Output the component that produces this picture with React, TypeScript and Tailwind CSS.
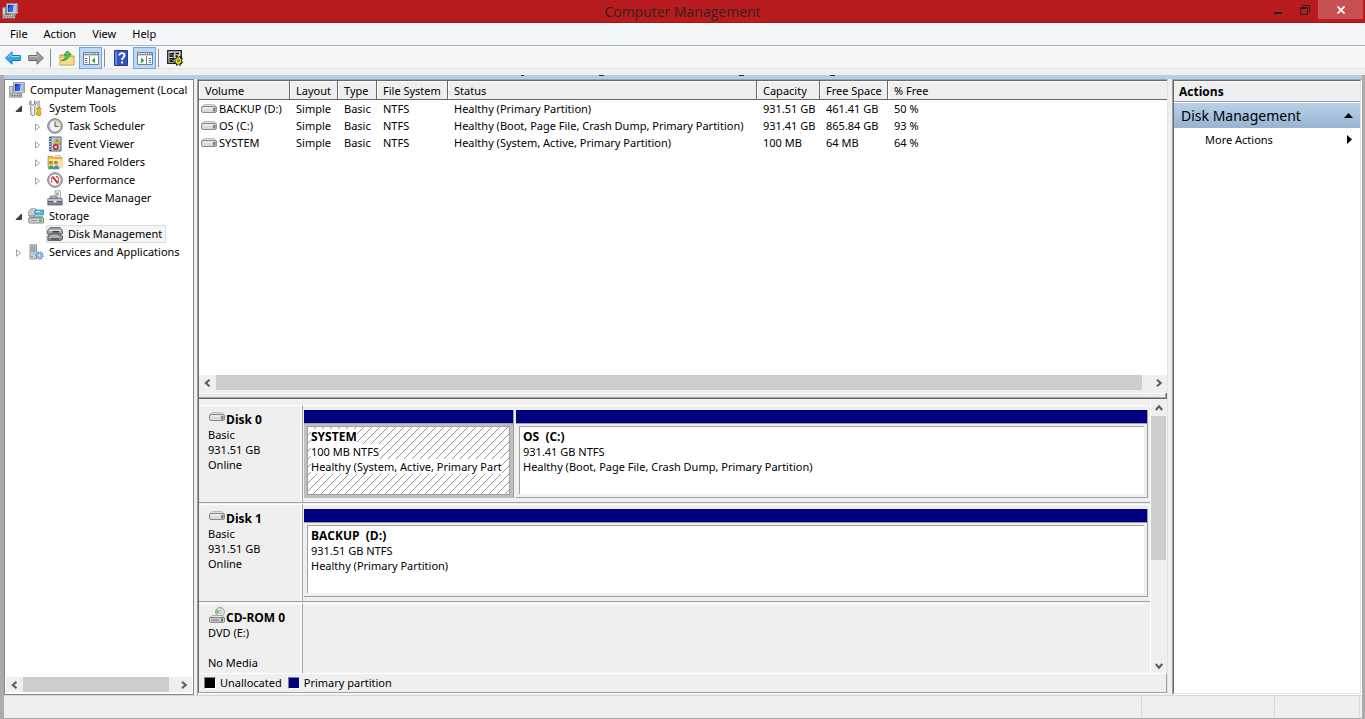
import React from 'react';

type IconProps = { className?: string };

function ComputerIcon({ className = 'h-4 w-4' }: IconProps) {
  return (
    <svg viewBox="0 0 16 16" className={className} aria-hidden="true">
      <path d="M4.500.6h11.100v9.800H4.500z" fill="#dddbd0" stroke="#8f8f88" strokeWidth=".9" />
      <path d="M5.800 1.900h8.600v7H5.800z" fill="#1532b4" />
      <path d="M11.500 1.900h2.900v7h-4z" fill="#a9c6f2" />
      <path d="M6.500 5.500 9.500 1.900h2L10 8.900H7z" fill="#2f62ec" />
      <path d="M8 10.500h5l1 2H8z" fill="#b9b9b0" />
      <path d="M.6 4.500h3v7.500h-3z" fill="#cfd3d6" stroke="#7f8487" strokeWidth=".8" />
      <path d="M.8 11.500h11.700l1.200 4H0z" fill="#7f868c" />
      <path d="M1.500 12.600h10.500M1 14.200h12" stroke="#e2e5e8" strokeWidth=".9" strokeDasharray="1.500 1" />
    </svg>
  );
}

function ToolsIcon() {
  return (
    <svg viewBox="0 0 16 16" className="h-4 w-4" aria-hidden="true">
      <path d="M3 .8v3.400l1.800 1 1.800-1V.8c2 1 2.200 3.800.2 5.400V14c0 2-4 2-4 0V6.200C.8 4.600 1 1.800 3 .8z" fill="#eceeef" stroke="#6f7275" strokeWidth=".9" />
      <path d="M9.800 1h1.800v7H9.800z" fill="#d8dadc" stroke="#85888b" strokeWidth=".6" />
      <path d="M8.700 8h4v2l-.8.8.8 1V15c-.6 1-3.400 1-4 0v-3.200l.8-1-.8-.8z" fill="#f6b51c" stroke="#b97b08" strokeWidth=".7" />
    </svg>
  );
}

function ClockIcon() {
  return (
    <svg viewBox="0 0 16 16" className="h-4 w-4" aria-hidden="true">
      <circle cx="8" cy="8" r="7.300" fill="#b9bcc0" stroke="#77797c" strokeWidth="1" />
      <circle cx="8" cy="8" r="5.900" fill="#eef4fa" stroke="#8a8d92" strokeWidth=".6" />
      <path d="M8 8V2.400A5.600 5.600 0 0 1 13.600 8z" fill="#f7dda0" />
      <path d="M8 3.500V8.500h3.500" fill="none" stroke="#4a5670" strokeWidth="1" />
    </svg>
  );
}

function EventIcon() {
  return (
    <svg viewBox="0 0 16 16" className="h-4 w-4" aria-hidden="true">
      <path d="M2.500 1h11.500v14H2.500z" fill="#c3d6ec" stroke="#4c5f86" strokeWidth="1" />
      <path d="M2 1h2.500v14H2z" fill="#49597e" />
      <path d="M1 3h3M1 5.500h3M1 8h3M1 10.500h3M1 13h3" stroke="#d5dae3" strokeWidth="1" />
      <path d="M6 3.500h7M6 6h7M6 8.500h7M6 13.500h7" stroke="#7a93bd" strokeWidth=".7" />
      <path d="m10 2.500 3 5.300H7z" fill="#ffd21f" stroke="#a7800b" strokeWidth=".6" />
      <path d="M10 4.300v2" stroke="#222" strokeWidth=".8" />
      <circle cx="8.700" cy="11" r="2.800" fill="#d93a34" stroke="#8f1b18" strokeWidth=".5" />
      <path d="m7.700 10 2 2m0-2-2 2" stroke="#fff" strokeWidth=".9" />
    </svg>
  );
}

function SharedIcon() {
  return (
    <svg viewBox="0 0 16 16" className="h-4 w-4" aria-hidden="true">
      <path d="M1 2.500h5l1 1.200h8V13H1z" fill="#e9bd4b" stroke="#b98b24" strokeWidth=".7" />
      <path d="M2 5h13v8H2z" fill="#fbe39a" />
      <path d="M8.500 1.500h4.500v2H8.500z" fill="#fff3c4" stroke="#b98b24" strokeWidth=".5" />
      <path d="M2.500 7.500h3v2.500h-3zM7.500 7.500h3v2.500h-3z" fill="#4a3a22" />
      <circle cx="4.300" cy="9.800" r="1.500" fill="#d9a46b" />
      <circle cx="9.300" cy="9.800" r="1.500" fill="#d9a46b" />
      <path d="M1.200 15.300c0-5 5.900-5 5.900 0z" fill="#3aa26b" />
      <path d="M6.400 15.300c0-5 5.900-5 5.900 0z" fill="#3f8fd0" />
    </svg>
  );
}

function GaugeIcon() {
  return (
    <svg viewBox="0 0 16 16" className="h-4 w-4" aria-hidden="true">
      <circle cx="8" cy="8" r="7.300" fill="#c3c5c8" stroke="#77797c" strokeWidth="1" />
      <circle cx="8" cy="8" r="5.900" fill="#fff" stroke="#8a8d92" strokeWidth=".6" />
      <path d="M4.700 10.500V6.500L6 5M9 4.300l2.300 1.200V10" fill="none" stroke="#d21f24" strokeWidth="1.200" strokeDasharray="2 .7" />
      <path d="m5.500 4.500 5.500 7" stroke="#c01a20" strokeWidth="1.700" />
    </svg>
  );
}

function DeviceIcon() {
  return (
    <svg viewBox="0 0 16 16" className="h-4 w-4" aria-hidden="true">
      <path d="M8 .8h5.500v7H8z" fill="#f4f6f7" stroke="#8d9296" strokeWidth=".8" />
      <path d="M9.500 2.500h2v3h-2z" fill="#5cae4d" />
      <path d="M3 6h7v3H3z" fill="#aab0b5" stroke="#6d7378" strokeWidth=".7" />
      <path d="M.8 8.500h14.400v3H.8z" fill="#bfc4c8" stroke="#5f656a" strokeWidth=".7" />
      <path d="M.8 11.500h14.400V15H.8z" fill="#7f868c" stroke="#4f555a" strokeWidth=".7" />
      <path d="M6.500 10.500h3v2h-3z" fill="#e7e9eb" />
    </svg>
  );
}

function StorageIcon() {
  return (
    <svg viewBox="0 0 16 16" className="h-4 w-4" aria-hidden="true">
      <path d="M.6 7.500V4c1-4 6-4.500 8-2.500L7 7.500z" fill="#c8d1d6" stroke="#838b90" strokeWidth=".7" />
      <circle cx="4.500" cy="4.300" r="1.300" fill="#fff" stroke="#81898e" strokeWidth=".6" />
      <path d="M7 2h8.500v5H7z" fill="#59bce6" stroke="#337fa3" strokeWidth=".7" />
      <path d="M8 3.500h4" stroke="#dff5ff" />
      <path d="M1 8h14v2H1z" fill="#a5abb0" />
      <path d="M.8 10h14.700v5H.8z" fill="#d4d8db" stroke="#686e73" strokeWidth=".8" />
      <path d="M3 12.500h6" stroke="#888e93" />
      <path d="M11 11.500h3v2h-3z" fill="#29b33c" />
    </svg>
  );
}

function DiskStackIcon() {
  return (
    <svg viewBox="0 0 16 16" className="h-4 w-4" aria-hidden="true">
      <path d="M3 1.500h10l2.500 3v3.500H.6V4.500z" fill="#a2a5a7" stroke="#55585a" strokeWidth=".8" />
      <path d="M2 4.500h12" stroke="#e2e4e5" />
      <path d="M5.500 5.800h6.500" stroke="#303233" strokeWidth="1.400" />
      <path d="M2.500 8h10.500l2.500 2v3l-1.500 1.500H.8V10.500z" fill="#85888a" stroke="#4b4e50" strokeWidth=".8" />
      <path d="M2 11h12" stroke="#d6d8d9" />
      <path d="M4 13h8" stroke="#3b3d3e" strokeWidth="1" />
      <path d="M4 9.300h7" stroke="#d6d8d9" strokeWidth=".8" />
    </svg>
  );
}

function ServicesIcon() {
  return (
    <svg viewBox="0 0 16 16" className="h-4 w-4" aria-hidden="true">
      <path d="M2 .8h6.500V15H2z" fill="#cbd0d3" stroke="#7d8387" strokeWidth=".8" />
      <path d="M3 3h4.500M3 5h4.500M3 7h4.500" stroke="#6f767b" strokeWidth=".9" />
      <path d="M3.300 12.500h1.500" stroke="#2fa53c" strokeWidth="1.200" />
      <circle cx="7.500" cy="8.800" r="1.800" fill="#b7d1e8" stroke="#668cb0" strokeWidth=".8" strokeDasharray="1.200 .6" />
      <circle cx="11.500" cy="11.500" r="3.400" fill="#a9c8e4" stroke="#5d86ae" strokeWidth="1.400" strokeDasharray="1.600 1" />
      <circle cx="11.500" cy="11.500" r="1.300" fill="#fff" stroke="#5d86ae" strokeWidth=".6" />
    </svg>
  );
}

function DriveIcon() {
  return (
    <svg viewBox="0 0 16 10" className="h-[10px] w-4 shrink-0" aria-hidden="true">
      <path d="M3 .6h10L15.500 3H.5z" fill="#e4e4e4" stroke="#a2a2a2" strokeWidth=".7" />
      <rect x=".5" y="2.500" width="15" height="6" rx="1.600" fill="#d9d9e0" stroke="#7e7e82" strokeWidth=".9" />
      <path d="M2 4h9.500" stroke="#f8f8fb" strokeWidth="1" />
      <path d="M12 4h2.500v3.500H12z" fill="#777d78" />
      <path d="M13 4.500v2" stroke="#3fc43c" strokeWidth="1.200" />
    </svg>
  );
}

function CdIcon() {
  return (
    <svg viewBox="0 0 16 16" className="h-4 w-4 shrink-0" aria-hidden="true">
      <circle cx="11" cy="5" r="4.500" fill="#dde2e2" stroke="#8b9090" strokeWidth=".8" />
      <path d="M11 5 7.500 2.500C6.500 4 6.500 5.500 7.200 7zM11 5l1-4.300" fill="#70c46b" stroke="#8fcf8a" strokeWidth=".6" />
      <circle cx="11" cy="5" r="1.300" fill="#fff" stroke="#8b9090" strokeWidth=".6" />
      <path d="M3 8.500h10l2.500 2.500H.5z" fill="#ebebeb" stroke="#909090" strokeWidth=".7" />
      <rect x=".5" y="10.500" width="15" height="4.800" rx="1" fill="#d0d0d4" stroke="#737377" strokeWidth=".9" />
      <path d="M2.500 13h7" stroke="#6b6b6f" />
      <path d="M12 11.500h2v2.800h-2z" fill="#2d8f35" />
    </svg>
  );
}

function ArrowIcon({ forward = false }: { forward?: boolean }) {
  return (
    <svg viewBox="0 0 16 14" className="h-[14px] w-4" aria-hidden="true">
      {forward ? (
        <>
          <path d="M15.400 7 9 .8V4.500H.7v5H9v3.700z" fill="#9c9c9c" stroke="#6a6a6a" strokeWidth="1" />
          <path d="M1.500 5.500H10V3.200" fill="none" stroke="#c4c4c4" strokeWidth="1" />
        </>
      ) : (
        <>
          <path d="M.6 7 7 .8V4.500h8.300v5H7v3.700z" fill="#2fa8e6" stroke="#1b77b8" strokeWidth="1" />
          <path d="M2.500 6.500 6 3v2.500h8.300" fill="none" stroke="#8fdcff" strokeWidth="1" />
        </>
      )}
    </svg>
  );
}

function FolderUpIcon() {
  return (
    <svg viewBox="0 0 16 16" className="h-4 w-4" aria-hidden="true">
      <path d="M1 5h5l1 1h8v9H1z" fill="#efc860" stroke="#b58a2c" strokeWidth=".8" />
      <path d="M1.500 7.500h13v7h-13z" fill="#f8db88" />
      <path d="M2 10.500C6 9.500 6.800 7 6.800 5H5L8.500.8 12.500 5h-2.300C10 9 6.500 11 2 10.500z" fill="#4fc74a" stroke="#218a24" strokeWidth=".7" />
    </svg>
  );
}

function PaneIcon({ flipped = false }: { flipped?: boolean }) {
  return (
    <svg viewBox="0 0 16 13" className="h-[13px] w-4" aria-hidden="true">
      <path d="M.5.5h15v12H.5z" fill="#fff" stroke="#7b8087" />
      <path d="M1 1h14v3H1z" fill="#8b9096" />
      <path d="M1 1.500h9M1 3.500h14" stroke="#d3d7db" />
      <path d="M11 1.500h1m1 0h1" stroke="#fff" />
      {flipped ? (
        <>
          <path d="M9.500 4v8.500" stroke="#7b8087" />
          <path d="M11.500 6.500h2.500M11.500 8.500h2.500M11.500 10.500h2.500" stroke="#4d7fb5" />
          <path d="M4 5.500v6L7.300 8.500z" fill="#2bab33" />
        </>
      ) : (
        <>
          <path d="M6.500 4v8.500" stroke="#7b8087" />
          <path d="M2 6.500h2.500M2 8.500h2.500M2 10.500h2.500" stroke="#4d7fb5" />
          <path d="M12 5.500v6L8.700 8.500z" fill="#2bab33" />
        </>
      )}
    </svg>
  );
}

function HelpIcon() {
  return (
    <svg viewBox="0 0 14 16" className="h-4 w-[14px]" aria-hidden="true">
      <path d="M.5.5h13v15H.5z" fill="#3353bd" stroke="#23398f" />
      <path d="M1 1h2v14H1z" fill="#6a86dc" />
      <path d="M5.300 5.500c0-3.200 5.200-3 5.200 0 0 2-2.500 1.900-2.500 4.500" fill="none" stroke="#fff" strokeWidth="1.900" />
      <path d="M7 11.500h2v2H7z" fill="#fff" />
    </svg>
  );
}

function SettingsIcon() {
  return (
    <svg viewBox="0 0 16 16" className="h-4 w-4" aria-hidden="true">
      <path d="M.7.7h13.600v12.600H.7z" fill="#d2d2d2" stroke="#222" strokeWidth="1.300" />
      <path d="M3 3.500h3v3H3zM3 8.500h3v3H3z" fill="#fff" stroke="#111" strokeWidth="1.100" />
      <path d="m3.500 4.500 1 1L7 2.500M3.500 9.500l1 1L7 7.500" fill="none" stroke="#111" strokeWidth="1.100" />
      <path d="M8.500 3.500H12M8.500 6h2" stroke="#111" strokeWidth="1.400" />
      <path d="m10 6 1.500 1.500L13.500 6v2.300l2 .4-1.200 2 1.200 2-2.200.4V15.500l-2-1.400-1.800 1.400-.3-2.400-2.200-.6 1.500-1.800L7.200 8.800l2.500-.5z" fill="#f2e312" stroke="#111" strokeWidth=".9" />
      <path d="M10.700 9.900h1.600v1.600h-1.600z" fill="#fff" stroke="#222" strokeWidth=".7" />
    </svg>
  );
}

type Direction = 'left' | 'right' | 'up' | 'down';
const chevrons: Record<Direction, string> = {
  left: 'M5.500.8 1.800 4 5.500 7.200',
  right: 'M2 .8 5.700 4 2 7.200',
  up: 'M.8 6 4 2.300 7.200 6',
  down: 'M.8 2 4 5.700 7.200 2',
};

function ScrollButton({ direction, label }: { direction: Direction; label: string }) {
  return (
    <button type="button" aria-label={label} className="flex h-[15px] w-[17px] shrink-0 items-center justify-center">
      <svg viewBox="0 0 8 8" className="h-2 w-2" aria-hidden="true">
        <path d={chevrons[direction]} fill="none" stroke="#5a5a5a" strokeWidth="2" />
      </svg>
    </button>
  );
}

type TreeNode = { label: string; icon: React.ReactNode; state?: 'open' | 'closed'; selected?: boolean; children?: TreeNode[] };

const tree: TreeNode[] = [
  {
    label: 'System Tools',
    icon: <ToolsIcon />,
    state: 'open',
    children: [
      { label: 'Task Scheduler', icon: <ClockIcon />, state: 'closed' },
      { label: 'Event Viewer', icon: <EventIcon />, state: 'closed' },
      { label: 'Shared Folders', icon: <SharedIcon />, state: 'closed' },
      { label: 'Performance', icon: <GaugeIcon />, state: 'closed' },
      { label: 'Device Manager', icon: <DeviceIcon /> },
    ],
  },
  {
    label: 'Storage',
    icon: <StorageIcon />,
    state: 'open',
    children: [{ label: 'Disk Management', icon: <DiskStackIcon />, selected: true }],
  },
  { label: 'Services and Applications', icon: <ServicesIcon />, state: 'closed' },
];

function Expander({ state }: { state?: 'open' | 'closed' }) {
  if (!state) return <span className="w-3 shrink-0" />;
  return (
    <button type="button" aria-label={state === 'open' ? 'Collapse' : 'Expand'} className="flex w-3 shrink-0 justify-start pt-px pl-px">
      <svg viewBox="0 0 8 8" className="h-2 w-2" aria-hidden="true">
        {state === 'open' ? (
          <path d="M6.500 1v5.500H1z" fill="#404040" stroke="#262626" strokeWidth=".8" />
        ) : (
          <path d="M1.500.8v6.400L5.500 4z" fill="#fff" stroke="#a0a0a0" strokeWidth="1" />
        )}
      </svg>
    </button>
  );
}

function TreeItems({ nodes, nested = false }: { nodes: TreeNode[]; nested?: boolean }) {
  return (
    <ul className={nested ? 'pl-[19px]' : 'pl-[9px]'}>
      {nodes.map((node) => (
        <li key={node.label}>
          <div className="flex h-[18px] items-center">
            <Expander state={node.state} />
            <a
              href="#tree"
              className={
                node.selected
                  ? 'ml-px flex h-[18px] items-center gap-[5px] border border-[#dcdcdc] bg-[#f5f5f5] pr-[3px]'
                  : 'ml-px flex h-[18px] items-center gap-[5px] border border-transparent pr-[3px]'
              }
            >
              {node.icon}
              <span className="whitespace-nowrap">{node.label}</span>
            </a>
          </div>
          {node.children && <TreeItems nodes={node.children} nested />}
        </li>
      ))}
    </ul>
  );
}

const columns = [
  { name: 'Volume', width: 'w-[91px]' },
  { name: 'Layout', width: 'w-[48px]' },
  { name: 'Type', width: 'w-[39px]' },
  { name: 'File System', width: 'w-[71px]' },
  { name: 'Status', width: 'w-[309px]' },
  { name: 'Capacity', width: 'w-[63px]' },
  { name: 'Free Space', width: 'w-[68px]' },
  { name: '% Free', width: '' },
];

const volumes = [
  ['BACKUP (D:)', 'Simple', 'Basic', 'NTFS', 'Healthy (Primary Partition)', '931.51 GB', '461.41 GB', '50 %'],
  ['OS (C:)', 'Simple', 'Basic', 'NTFS', 'Healthy (Boot, Page File, Crash Dump, Primary Partition)', '931.41 GB', '865.84 GB', '93 %'],
  ['SYSTEM', 'Simple', 'Basic', 'NTFS', 'Healthy (System, Active, Primary Partition)', '100 MB', '64 MB', '64 %'],
];

function VolumeTable() {
  return (
    <table className="w-full table-fixed border-separate border-spacing-0">
      <colgroup>
        {columns.map((c) => (
          <col key={c.name} className={c.width} />
        ))}
      </colgroup>
      <thead>
        <tr className="h-[19px] bg-[#efefef]">
          {columns.map((c) => (
            <th
              key={c.name}
              className="overflow-hidden border-r border-b border-[#696969] p-0 text-left font-normal whitespace-nowrap last:border-r-0"
            >
              <div className="h-[18px] border-t border-l border-white pl-[5px] leading-[18px]">{c.name}</div>
            </th>
          ))}
        </tr>
      </thead>
      <tbody>
        {volumes.map((row) => (
          <tr key={row[0]} className="h-[17px]">
            {row.map((cell, i) => (
              <td key={i} className="p-0 leading-[17px] whitespace-nowrap">
                {i === 0 ? (
                  <span className="flex items-center gap-[2px] pl-[2px]">
                    <DriveIcon />
                    {cell}
                  </span>
                ) : (
                  <span className="block pl-[6px]">{cell}</span>
                )}
              </td>
            ))}
          </tr>
        ))}
      </tbody>
    </table>
  );
}

type PartitionInfo = { name: string; size: string; status: string; width: string; selected?: boolean };

function Partition({ name, size, status, width, selected }: PartitionInfo) {
  return (
    <button type="button" className={`flex flex-col border-r border-[#a0a0a0] text-left ${width}`}>
      <span className="h-[14px] w-full border-b border-[#a0a0a0] bg-[#000080]" />
      <span
        className={
          selected
            ? 'flex w-full flex-1 bg-[#bfbfbf] px-[3px] pt-[2px] pb-[3px]'
            : 'flex w-full flex-1 border-b border-[#a0a0a0] px-[3px] pt-[2px] pb-[3px]'
        }
      >
        <span
          className={
            selected
              ? 'relative min-w-0 flex-1 overflow-hidden border border-[#a0a0a0] bg-white pt-[2px] pl-[3px]'
              : 'min-w-0 flex-1 overflow-hidden border-t border-l border-[#a0a0a0] bg-white pt-[2px] pl-[3px]'
          }
        >
          {selected && (
            <svg className="absolute inset-0 h-full w-full" aria-hidden="true">
              <defs>
                <pattern id="hatch" width="8" height="8" patternUnits="userSpaceOnUse">
                  <path d="M-1 9 9-1M-1 1 1-1M7 9l2-2" stroke="#8c8c8c" strokeWidth=".9" />
                </pattern>
              </defs>
              <rect width="100%" height="100%" fill="url(#hatch)" />
            </svg>
          )}
          <span className="relative flex flex-col items-start leading-[15px] whitespace-nowrap">
            <span className="bg-white font-['Open_Sans'] text-[12px] font-bold whitespace-pre">{name}</span>
            <span className="bg-white">{size}</span>
            <span className="bg-white">{status}</span>
          </span>
        </span>
      </span>
    </button>
  );
}

type Disk = { name: string; lines: string[]; icon: React.ReactNode; partitions: PartitionInfo[] };

const disks: Disk[] = [
  {
    name: 'Disk 0',
    lines: ['Basic', '931.51 GB', 'Online'],
    icon: <DriveIcon />,
    partitions: [
      { name: 'SYSTEM', size: '100 MB NTFS', status: 'Healthy (System, Active, Primary Part', width: 'w-[210px] shrink-0', selected: true },
      { name: 'OS  (C:)', size: '931.41 GB NTFS', status: 'Healthy (Boot, Page File, Crash Dump, Primary Partition)', width: 'min-w-0 flex-1' },
    ],
  },
  {
    name: 'Disk 1',
    lines: ['Basic', '931.51 GB', 'Online'],
    icon: <DriveIcon />,
    partitions: [{ name: 'BACKUP  (D:)', size: '931.51 GB NTFS', status: 'Healthy (Primary Partition)', width: 'min-w-0 flex-1' }],
  },
  { name: 'CD-ROM 0', lines: ['DVD (E:)', '\u00a0', 'No Media'], icon: <CdIcon />, partitions: [] },
];

function DiskRow({ disk }: { disk: Disk }) {
  const media = disk.partitions.length > 0;
  return (
    <li className={media ? 'mb-px flex h-[98px] border-b border-[#a0a0a0]' : 'flex h-[70px]'}>
      <div className="w-[103px] shrink-0 border-t border-r border-white pt-[6px] pl-[9px] leading-[15px]">
        <h3 className="flex h-[15px] items-center gap-px pl-px font-['Open_Sans'] text-[12px] font-bold">
          <span className={media ? 'mb-[5px]' : 'mb-[6px]'}>{disk.icon}</span>
          <span className="whitespace-nowrap">{disk.name}</span>
        </h3>
        {disk.lines.map((line) => (
          <p key={line}>{line}</p>
        ))}
      </div>
      <div className="flex min-w-0 flex-1 gap-[2px] border-t border-l border-t-white border-l-[#a0a0a0] pt-[4px] pr-[2px] pb-[4px] pl-px">
        {disk.partitions.map((p) => (
          <Partition key={p.name} {...p} />
        ))}
      </div>
    </li>
  );
}

export default function App() {
  return (
    <div className="flex min-h-screen flex-col bg-[#efefef] font-['Noto_Sans','Open_Sans',sans-serif] text-[11px] leading-[18px] text-black">
      <header className="flex h-[23px] border-b border-[#9c181a] bg-[#b81c1e]">
        <div className="w-[120px] pt-[3px] pl-[2px]">
          <ComputerIcon />
        </div>
        <h1 className="flex-1 text-center font-['Open_Sans'] text-[14px] leading-[23px] text-[#33211f]">Computer Management</h1>
        <div className="flex w-[120px] items-start justify-end">
          <button type="button" aria-label="Minimize" className="flex h-[19px] w-[26px] items-center justify-center">
            <svg viewBox="0 0 8 8" className="h-2 w-2" aria-hidden="true">
              <path d="M0 7h8" stroke="#222" strokeWidth="2" />
            </svg>
          </button>
          <button type="button" aria-label="Restore" className="flex h-[19px] w-[27px] items-center justify-center">
            <svg viewBox="0 0 10 10" className="h-[10px] w-[10px]" aria-hidden="true">
              <path d="M2.500.5h7v7M.5 2.500h7v7h-7zM.5 3.500h7" fill="none" stroke="#222" />
            </svg>
          </button>
          <button type="button" aria-label="Close" className="mr-[2px] flex h-[19px] w-[45px] items-center justify-center bg-[#c75050]">
            <svg viewBox="0 0 8 8" className="h-2 w-2" aria-hidden="true">
              <path d="m.5.5 7 7m0-7-7 7" stroke="#fff" strokeWidth="1.700" />
            </svg>
          </button>
        </div>
      </header>

      <nav aria-label="Menu bar" className="flex h-[23px] items-center border-b border-[#b1b5ba] bg-[#f5f6f7] pl-[2px]">
        {['File', 'Action', 'View', 'Help'].map((item) => (
          <button key={item} type="button" className="px-2">
            {item}
          </button>
        ))}
      </nav>

      <div role="toolbar" aria-label="Tools" className="flex h-[23px] items-center border-b border-[#e3e4e6] bg-[#f5f6f7] pt-[2px] pl-[5px]">
        <button type="button" aria-label="Back"><ArrowIcon /></button>
        <button type="button" aria-label="Forward" className="ml-[7px]"><ArrowIcon forward /></button>
        <span className="ml-[6px] h-[18px] w-px bg-[#8c8c8c]" />
        <button type="button" aria-label="Up one level" className="ml-[8px]"><FolderUpIcon /></button>
        <button type="button" aria-label="Show console tree" className="ml-[4px] flex h-[22px] w-[23px] items-center justify-center border border-[#66a7e8] bg-[#b9d9f7]">
          <PaneIcon />
        </button>
        <span className="ml-[2px] h-[18px] w-px bg-[#8c8c8c]" />
        <button type="button" aria-label="Help" className="ml-[9px]"><HelpIcon /></button>
        <button type="button" aria-label="Show action pane" className="ml-[5px] flex h-[22px] w-[23px] items-center justify-center border border-[#66a7e8] bg-[#b9d9f7]">
          <PaneIcon flipped />
        </button>
        <span className="ml-[2px] h-[18px] w-px bg-[#8c8c8c]" />
        <button type="button" aria-label="Settings" className="ml-[8px]"><SettingsIcon /></button>
      </div>

      <div className="h-[6px] shrink-0" />

      <div className="flex flex-1 flex-col border-r-[3px] border-b border-l-4 border-[#ababab]">
        <div className="relative h-1 bg-[#b4cde8]">
          <svg className="absolute top-0 left-[516px] h-px w-[320px]" aria-hidden="true">
            <path d="M1 .5h3M79 .5h5M219 .5h5M310 .5h5" stroke="#2a2f38" />
          </svg>
        </div>
        <div className="flex flex-1">
          <aside className="flex w-[190px] shrink-0 flex-col border border-[#828790] bg-white">
            <div className="min-h-0 flex-1 overflow-hidden pt-px">
              <a href="#tree" className="flex h-[18px] items-center gap-[5px] pl-1">
                <ComputerIcon className="h-4 w-4 shrink-0" />
                <span className="whitespace-nowrap">Computer Management (Local</span>
              </a>
              <TreeItems nodes={tree} />
            </div>
            <div className="mx-px mb-[2px] flex h-[15px] bg-[#efefef]">
              <ScrollButton direction="left" label="Scroll left" />
              <span className="flex-1 bg-[#cdcdcd]" />
              <span className="w-[6px]" />
              <ScrollButton direction="right" label="Scroll right" />
            </div>
          </aside>

          <main className="ml-[3px] flex min-w-0 flex-1 flex-col border-t border-r border-l border-[#a0a0a0] border-r-[#e3e3e3]">
            <div className="flex flex-1 flex-col border-t border-l border-[#696969]">
              <section aria-label="Volumes" className="flex flex-1 flex-col">
                <div className="flex-1 bg-white">
                  <VolumeTable />
                </div>
                <div className="flex h-[15px]">
                  <ScrollButton direction="left" label="Scroll left" />
                  <span className="flex-1 bg-[#cdcdcd]" />
                  <span className="w-[8px]" />
                  <ScrollButton direction="right" label="Scroll right" />
                </div>
                <div className="mt-[3px] h-[6px] border-r border-b border-[#696969]">
                  <div className="h-[5px] border-t border-r border-b border-t-white border-r-[#a0a0a0] border-b-[#a0a0a0]">
                    <div className="h-px bg-[#e3e3e3]" />
                  </div>
                </div>
              </section>

              <section aria-label="Disks" className="flex">
                <ul className="min-w-0 flex-1 border-r border-white pt-[6px]">
                  {disks.map((d) => (
                    <DiskRow key={d.name} disk={d} />
                  ))}
                </ul>
                <div className="mr-px flex w-[15px] flex-col items-center pt-px">
                  <ScrollButton direction="up" label="Scroll up" />
                  <span className="mt-px h-[144px] w-full bg-[#cdcdcd]" />
                  <span className="flex-1" />
                  <ScrollButton direction="down" label="Scroll down" />
                </div>
              </section>

              <footer className="flex h-[20px] items-center border border-t-white border-r-[#a0a0a0] border-b-[#a0a0a0] border-l-transparent pl-[4px]">
                <span className="h-3 w-3 border border-t-[#808080] border-r-white border-b-white border-l-[#808080] bg-black" />
                <span className="ml-[4px]">Unallocated</span>
                <span className="ml-[6px] h-3 w-3 border border-t-[#808080] border-r-white border-b-white border-l-[#808080] bg-[#000080]" />
                <span className="ml-[4px]">Primary partition</span>
              </footer>
            </div>
            <div className="mb-px h-px bg-white" />
          </main>

          <aside className="ml-[4px] flex w-[190px] shrink-0 flex-col border border-t-[#a0a0a0] border-r-white border-b-white border-l-[#a0a0a0]">
            <div className="flex-1 border border-t-[#696969] border-r-[#e3e3e3] border-b-[#e3e3e3] border-l-[#696969] bg-white">
              <h2 className="mt-px h-[20px] border-b border-[#a0a0a0] bg-[#efefef] pl-[5px] font-['Open_Sans'] text-[12px] leading-[19px] font-bold">Actions</h2>
              <button type="button" className="mt-px flex h-[25px] w-full items-center justify-between bg-linear-to-b from-[#b9d1ea] to-[#98b4d2] px-[7px] text-[14px]">
                Disk Management
                <svg viewBox="0 0 9 5" className="h-[5px] w-[9px]" aria-hidden="true"><path d="M0 5 4.500 0 9 5z" fill="#000" /></svg>
              </button>
              <button type="button" className="flex h-[23px] w-full items-center justify-between pr-[8px] pl-[31px]">
                More Actions
                <svg viewBox="0 0 5 9" className="h-[9px] w-[5px]" aria-hidden="true"><path d="M0 0v9l5-4.500z" fill="#000" /></svg>
              </button>
            </div>
          </aside>
        </div>
        <footer aria-label="Status bar" className="flex h-[23px] border-t border-[#d7d7d7] py-px">
          <span className="flex-1 border-r border-[#d7d7d7]" />
          <span className="w-[133px] border-r border-[#d7d7d7]" />
          <span className="mr-[2px] w-[85px] border-r border-[#d7d7d7]" />
        </footer>
      </div>
    </div>
  );
}
